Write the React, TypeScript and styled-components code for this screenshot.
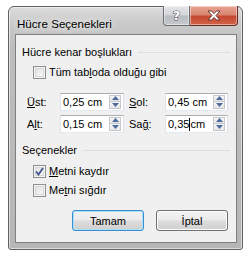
import React from "react";
import styled, { createGlobalStyle } from "styled-components";

const Global = createGlobalStyle`
  html, body { margin: 0; padding: 0; background: #ffffff; }
  body { font-family: "Liberation Sans", Arial, sans-serif; }
  * { box-sizing: border-box; }
`;

const Window = styled.div`
  margin: 6px 0 0 8px;
  width: 235px;
  height: 244px;
  border: 1px solid #5f6163;
  border-radius: 6px 6px 3px 3px;
  background: linear-gradient(180deg, #dcdcdc 0px, #cacaca 16px, #bdbdbd 40px, #b6b6b6 100%);
  box-shadow: inset 0 0 0 1px rgba(255, 255, 255, 0.5);
  display: flex;
  flex-direction: column;
  padding: 0 5px 6px 6px;
`;

const TitleBar = styled.div`
  height: 27px;
  display: flex;
  align-items: flex-start;
`;

const Title = styled.div`
  margin: 10px 0 0 2px;
  font-size: 11.6px;
  line-height: 14px;
  color: #000;
  text-shadow: 0 0 6px rgba(255, 255, 255, 0.95), 0 0 10px rgba(255, 255, 255, 0.8);
`;

const Caption = styled.div`
  margin: -1px -1px 0 auto;
  display: flex;
  height: 20px;
`;

const CapButton = styled.div<{ $close?: boolean }>`
  height: 20px;
  width: ${(p) => (p.$close ? "48px" : "27px")};
  display: flex;
  align-items: center;
  justify-content: center;
  border: 1px solid ${(p) => (p.$close ? "#6a2a22" : "#6b6d70")};
  border-top: none;
  border-left: ${(p) => (p.$close ? "none" : undefined)};
  border-radius: ${(p) => (p.$close ? "0 0 4px 0" : "0 0 0 4px")};
  background: ${(p) =>
    p.$close
      ? "linear-gradient(180deg, #e8a493 0%, #d98571 45%, #c6482f 55%, #d0644a 100%)"
      : "linear-gradient(180deg, #e4e6e8 0%, #d3d5d8 45%, #b9bcc0 55%, #c5c8cc 100%)"};
  box-shadow: inset 0 0 0 1px rgba(255, 255, 255, 0.45);
`;

const Help = styled.span`
  font-family: "DejaVu Sans", sans-serif;
  font-weight: bold;
  font-size: 13px;
  line-height: 13px;
  color: #ffffff;
  -webkit-text-stroke: 1px #4b4f55;
  paint-order: stroke fill;
`;

const Client = styled.div`
  flex: 1;
  border: 1px solid #7d7f82;
  background: #f0f0f0;
  display: flex;
  flex-direction: column;
  font-size: 11px;
  color: #000;
`;

const GroupHeader = styled.div<{ $top: number }>`
  margin: ${(p) => p.$top}px 6px 0 6px;
  height: 14px;
  display: flex;
  align-items: center;
  line-height: 14px;
  white-space: nowrap;
`;

const Rule = styled.div`
  flex: 1;
  height: 1px;
  margin-left: 6px;
  background: #d5dfe5;
`;

const CheckRow = styled.label<{ $top: number }>`
  margin: ${(p) => p.$top}px 0 0 17px;
  height: 16px;
  display: flex;
  align-items: center;
  gap: 3px;
  line-height: 14px;
  white-space: nowrap;
`;

const Box = styled.span`
  width: 13px;
  height: 13px;
  border: 1px solid #8e8f8f;
  background: linear-gradient(135deg, #dcdcdc 0%, #f0f0f0 60%, #fbfbfb 100%);
  box-shadow: inset 0 0 0 1px #f4f4f4, inset 0 0 0 2px #d8d8d8;
  display: flex;
  align-items: center;
  justify-content: center;
  flex: none;
`;

const Fields = styled.div`
  margin: 13px 0 0 11px;
  display: grid;
  grid-template-columns: 33px 64px 5px 36px 63px;
  grid-auto-rows: 18px;
  row-gap: 4px;
  align-items: center;
`;

const FieldLabel = styled.span<{ $col: number }>`
  grid-column: ${(p) => p.$col};
  line-height: 14px;
`;

const Input = styled.div<{ $col: number }>`
  grid-column: ${(p) => p.$col};
  height: 18px;
  border: 1px solid #abadb3;
  border-right-color: #dbdfe6;
  border-bottom-color: #e3e9ef;
  border-left-color: #e2e3ea;
  background: #fff;
  display: flex;
  align-items: center;
  padding: 0 2px 0 2px;
  line-height: 14px;
  white-space: nowrap;
`;

const Value = styled.span`
  flex: 1;
  display: flex;
  align-items: center;
`;

const Caret = styled.span`
  display: inline-block;
  width: 1px;
  height: 13px;
  background: #000;
`;

const Spinner = styled.div`
  width: 12px;
  height: 14px;
  display: flex;
  flex-direction: column;
  gap: 0;
  margin-bottom: 1px;
`;

const SpinHalf = styled.div`
  flex: 1;
  border: 1px solid #c4c7cc;
  background: linear-gradient(180deg, #f6f6f6 0%, #e6e6e6 100%);
  display: flex;
  align-items: center;
  justify-content: center;
  & + & { border-top: none; }
`;

const ButtonRow = styled.div`
  margin: 12px 8px 0 0;
  display: flex;
  justify-content: flex-end;
  gap: 12px;
`;

const Button = styled.div<{ $default?: boolean }>`
  width: 72px;
  height: 21px;
  border: 1px solid ${(p) => (p.$default ? "#3c8ed0" : "#707070")};
  border-radius: 3px;
  background: linear-gradient(180deg, #f2f2f2 0%, #ebebeb 48%, #dddddd 52%, #cfcfcf 100%);
  box-shadow: inset 0 0 0 1px ${(p) => (p.$default ? "#a6e0fa" : "#fbfbfb")};
  display: flex;
  align-items: center;
  justify-content: center;
  line-height: 14px;
`;

const Arrow = ({ up }: { up?: boolean }) => (
  <svg width="7" height="4" viewBox="0 0 7 4">
    <path d={up ? "M0 4 L3.5 0 L7 4 Z" : "M0 0 L3.5 4 L7 0 Z"} fill="#4e6a9c" />
  </svg>
);

const Spin = () => (
  <Spinner>
    <SpinHalf>
      <Arrow up />
    </SpinHalf>
    <SpinHalf>
      <Arrow />
    </SpinHalf>
  </Spinner>
);

const Check = () => (
  <svg width="9" height="9" viewBox="0 0 9 9">
    <path d="M1 4.5 L3.5 7.5 L8 1" fill="none" stroke="#3f5491" strokeWidth="1.8" />
  </svg>
);

const CloseGlyph = () => (
  <svg width="14" height="11" viewBox="0 0 14 11">
    <path
      d="M1 1 L4.5 1 L7 3.6 L9.5 1 L13 1 L9 5.5 L13 10 L9.5 10 L7 7.4 L4.5 10 L1 10 L5 5.5 Z"
      fill="#ffffff"
      stroke="#5a2a24"
      strokeWidth="0.9"
      strokeLinejoin="round"
    />
  </svg>
);

export default function App() {
  return (
    <>
      <Global />
      <Window>
        <TitleBar>
          <Title>Hücre Seçenekleri</Title>
          <Caption>
            <CapButton>
              <Help>?</Help>
            </CapButton>
            <CapButton $close>
              <CloseGlyph />
            </CapButton>
          </Caption>
        </TitleBar>
        <Client>
          <GroupHeader $top={10}>
            Hücre kenar boşlukları
            <Rule />
          </GroupHeader>
          <CheckRow $top={5}>
            <Box />
            <span>
              Tüm tab<u>l</u>oda olduğu gibi
            </span>
          </CheckRow>
          <Fields>
            <FieldLabel $col={1}>
              <u>Ü</u>st:
            </FieldLabel>
            <Input $col={2}>
              <Value>0,25 cm</Value>
              <Spin />
            </Input>
            <FieldLabel $col={4}>
              <u>S</u>ol:
            </FieldLabel>
            <Input $col={5}>
              <Value>0,45 cm</Value>
              <Spin />
            </Input>
            <FieldLabel $col={1}>
              A<u>l</u>t:
            </FieldLabel>
            <Input $col={2}>
              <Value>0,15 cm</Value>
              <Spin />
            </Input>
            <FieldLabel $col={4}>
              Sa<u>ğ</u>:
            </FieldLabel>
            <Input $col={5}>
              <Value>
                0,35
                <Caret />
                cm
              </Value>
              <Spin />
            </Input>
          </Fields>
          <GroupHeader $top={10}>
            Seçenekler
            <Rule />
          </GroupHeader>
          <CheckRow $top={6}>
            <Box>
              <Check />
            </Box>
            <span>
              <u>M</u>etni kaydır
            </span>
          </CheckRow>
          <CheckRow $top={3}>
            <Box />
            <span>
              Me<u>t</u>ni sığdır
            </span>
          </CheckRow>
          <ButtonRow>
            <Button $default>Tamam</Button>
            <Button>İptal</Button>
          </ButtonRow>
        </Client>
      </Window>
    </>
  );
}
